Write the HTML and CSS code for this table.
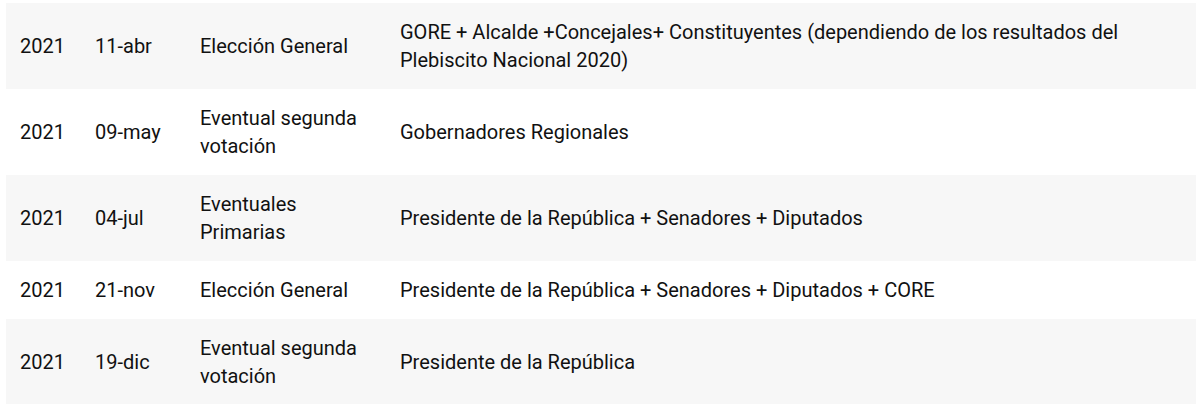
FILE: index.html
```html
<!DOCTYPE html>
<html lang="es">
<head>
<meta charset="utf-8">
<link rel="stylesheet" href="styles.css">
</head>
<body>
<table class="calendar">
  <colgroup>
    <col class="c-year">
    <col class="c-date">
    <col class="c-type">
    <col class="c-desc">
  </colgroup>
  <tbody>
    <tr>
      <td>2021</td>
      <td>11-abr</td>
      <td>Elección General</td>
      <td>GORE + Alcalde +Concejales+ Constituyentes (dependiendo de los resultados del Plebiscito Nacional 2020)</td>
    </tr>
    <tr>
      <td>2021</td>
      <td>09-may</td>
      <td>Eventual segunda votación</td>
      <td>Gobernadores Regionales</td>
    </tr>
    <tr>
      <td>2021</td>
      <td>04-jul</td>
      <td>Eventuales Primarias</td>
      <td>Presidente de la República + Senadores + Diputados</td>
    </tr>
    <tr>
      <td>2021</td>
      <td>21-nov</td>
      <td>Elección General</td>
      <td>Presidente de la República + Senadores + Diputados + CORE</td>
    </tr>
    <tr>
      <td>2021</td>
      <td>19-dic</td>
      <td>Eventual segunda votación</td>
      <td>Presidente de la República</td>
    </tr>
  </tbody>
</table>
</body>
</html>
```
FILE: styles.css
```css
html, body {
  margin: 0;
  padding: 0;
  background: #ffffff;
}
body {
  font-family: Roboto, "Liberation Sans", sans-serif;
  font-size: 20px;
  line-height: 28px;
  color: #111111;
}
.calendar {
  border-collapse: collapse;
  table-layout: fixed;
  width: 1190px;
  margin: 3px 0 0 6px;
}
.c-year { width: 75px; }
.c-date { width: 105px; }
.c-type { width: 200px; }
.c-desc { width: 810px; }
.calendar td {
  padding: 15px 14px;
  vertical-align: middle;
  text-align: left;
}
.calendar tr:nth-child(odd) td {
  background: #f7f7f7;
}
```
